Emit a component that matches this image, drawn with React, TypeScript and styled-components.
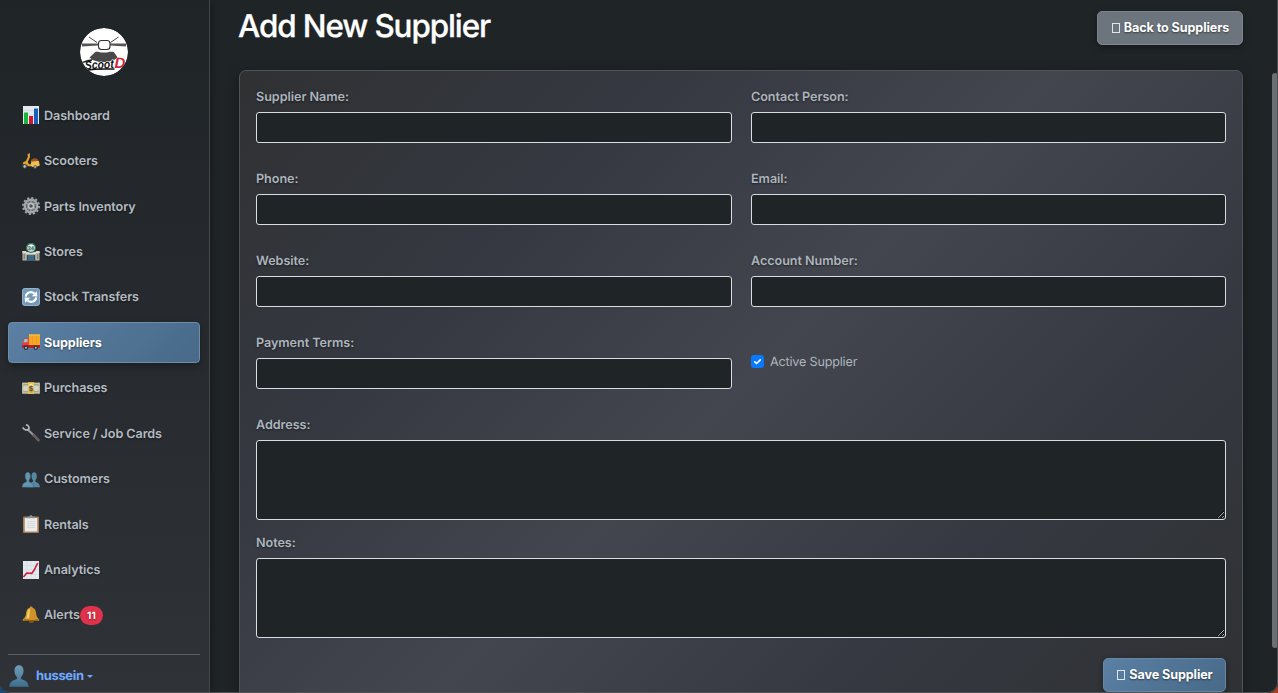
import React from "react";
import styled, { createGlobalStyle, css } from "styled-components";

const GlobalStyle = createGlobalStyle`
  *, *::before, *::after { box-sizing: border-box; }
  html, body { margin: 0; height: 100%; overflow: hidden; }
  body {
    background: linear-gradient(90deg, #174a74 0%, #174a74 50%, #a8401f 50%, #a8401f 100%);
    font-family: Inter, "Liberation Sans", sans-serif;
    font-size: 12.6px;
    text-rendering: geometricPrecision;
    color: #b4bbc2;
  }
`;

const Shell = styled.div`
  position: relative;
  display: flex;
  width: 1278px;
  height: 693px;
  overflow: hidden;
  background: #1f2427;
  border-radius: 0 0 10px 10px;
  &::after {
    content: "";
    position: absolute;
    inset: 0;
    border: solid #4d5154;
    border-width: 0 1px 1px 0;
    border-radius: 0 0 10px 10px;
    pointer-events: none;
  }
`;

const Sidebar = styled.aside`
  flex: 0 0 210px;
  display: flex;
  flex-direction: column;
  padding: 28px 9px 0 8px;
  border-right: 1px solid #43474b;
  background: linear-gradient(180deg, #1f2427 0%, #2f3237 100%);
  box-shadow: 2px 0 8px rgba(0, 0, 0, 0.28);
`;

const Logo = styled.svg`
  display: block;
  align-self: center;
  width: 48px;
  height: 48px;
  border-radius: 50%;
  flex: none;
`;

const Nav = styled.nav`
  display: flex;
  flex-direction: column;
  gap: 4.45px;
  margin-top: 18.7px;
`;

const NavItem = styled.a<{ $active?: boolean }>`
  display: flex;
  align-items: center;
  height: 41px;
  padding: 0 13px;
  border: 1px solid transparent;
  border-radius: 4px;
  font-weight: 600;
  letter-spacing: -0.08px;
  white-space: nowrap;
  text-shadow: 0 1px 2px rgba(0, 0, 0, 0.5);
  ${(p) =>
    p.$active &&
    css`
      color: #fff;
      font-weight: 700;
      border-color: #6d8dab;
      background: linear-gradient(135deg, #5b80a4, #486988);
      box-shadow: 0 3px 8px rgba(0, 0, 0, 0.35);
    `}
`;

const Label = styled.span`
  padding-top: 1.9px;
`;

const Icon = styled.svg`
  width: 18px;
  height: 18px;
  margin-right: 4px;
  flex: none;
`;

const Badge = styled.span`
  display: grid;
  place-items: center;
  width: 23px;
  height: 19px;
  padding-top: 1px;
  border-radius: 10px;
  background: #e0324a;
  color: #fff;
  font-size: 10px;
  font-weight: 700;
  letter-spacing: 0;
`;

const User = styled.div`
  display: flex;
  align-items: center;
  margin-top: 18px;
  padding-top: 9px;
  border-top: 1px solid #5b5f63;
  color: #6ea8fe;
  font-size: 13px;
  font-weight: 700;
  letter-spacing: -0.35px;
`;

const Avatar = styled.svg`
  width: 22px;
  height: 24px;
  margin-right: 6px;
`;

const Caret = styled.i`
  margin: 1px 0 0 3px;
  border: 3px solid transparent;
  border-top-color: #6ea8fe;
  border-bottom: 0;
`;

const Main = styled.main`
  flex: 1;
  display: flex;
  flex-direction: column;
  padding: 0 35px 0 29px;
`;

const Header = styled.header`
  display: flex;
  justify-content: space-between;
  height: 70px;
  flex: none;
`;

const Title = styled.h1`
  margin: 7px 0 0 -1px;
  color: #fff;
  font-size: 31.4px;
  line-height: 38px;
  font-weight: 500;
  letter-spacing: -1.1px;
  -webkit-text-stroke: 0.3px #fff;
`;

const Button = styled.button<{ $primary?: boolean }>`
  display: flex;
  align-items: center;
  justify-content: center;
  gap: 4px;
  width: ${(p) => (p.$primary ? 123 : 146)}px;
  height: 34px;
  padding: 0 0 1px 1px;
  border: 1px solid ${(p) => (p.$primary ? "#6587a8" : "#7d868e")};
  border-radius: 5px;
  background: ${(p) => (p.$primary ? "linear-gradient(135deg, #5b80a4, #486988)" : "#6c757d")};
  box-shadow: 0 2px 6px rgba(0, 0, 0, 0.35);
  color: #fff;
  font: 700 12.6px Inter, "Liberation Sans", sans-serif;
  letter-spacing: -0.1px;
  text-shadow: 0 1px 2px rgba(0, 0, 0, 0.5);
`;

const HeaderAction = styled.div`
  padding-top: 11px;
`;

const MissingGlyph = styled.i`
  width: 8px;
  height: 10px;
  border: 1px solid #e3e6e8;
`;

const Card = styled.form`
  display: flex;
  flex-direction: column;
  flex: none;
  height: 640px;
  padding: 16px;
  border: 1px solid #505357;
  border-radius: 7px;
  background: linear-gradient(135deg, #2f3133 0%, #353840 25%, #43464e 50%, #353840 75%, #2f3133 100%);
  box-shadow: 0 4px 14px rgba(0, 0, 0, 0.3);
`;

const Fields = styled.div`
  display: grid;
  grid-template-columns: 476px 475px;
  gap: 26px 19px;
`;

const Field = styled.label<{ $top?: number }>`
  display: flex;
  flex-direction: column;
  gap: 6px;
  margin-top: ${(p) => p.$top ?? 0}px;
`;

const Caption = styled.span`
  height: 19px;
  line-height: 21px;
  font-weight: 600;
  color: #adb5bd;
  letter-spacing: -0.04px;
  text-shadow: 0 1px 2px rgba(0, 0, 0, 0.5);
`;

const control = css`
  display: block;
  width: 100%;
  border: 1px solid #d9dde1;
  border-radius: 3px;
  background: #1f2427;
  color: #dee2e6;
  font: inherit;
  outline: none;
`;

const Input = styled.input`
  ${control}
  height: 31px;
`;

const TextArea = styled.textarea`
  ${control}
  height: 80px;
  resize: vertical;
`;

const CheckField = styled.label`
  display: flex;
  align-items: center;
  gap: 6px;
  height: 19px;
  margin-top: 19px;
  color: #adb5bd;
  letter-spacing: -0.18px;
`;

const CheckMark = styled.svg`
  width: 13px;
  height: 13px;
  border-radius: 3px;
  background: #087aff;
`;

const Actions = styled.div`
  display: flex;
  justify-content: flex-end;
  margin-top: 20px;
`;

const ScrollThumb = styled.div`
  position: absolute;
  top: 73px;
  right: 0;
  width: 6px;
  height: 575px;
  border-radius: 3px;
  background: #6b6e72;
`;

const person = "M9 1c2.5 0 3.8 1.8 3.7 4.5-.1 2-1 3.5-2 4.3v1.4c2.8.8 5.8 1.7 6.3 5.8H1c.5-4.1 3.5-5 6.3-5.8V9.8c-1-.8-1.9-2.3-2-4.3C5.2 2.8 6.5 1 9 1Z";

const icons: Record<string, React.ReactNode> = {
  Dashboard: (
    <>
      <path fill="#e4ebf0" d="M1 0h16v18H1z" />
      <path stroke="#c4ced6" strokeWidth=".5" d="M1 4.5h16M1 9h16M1 13.5h16" />
      <path fill="#16b83c" d="M2 6.5h4V18H2z" />
      <path fill="#cf1730" d="M7 10h4v8H7z" />
      <path fill="#1660bd" d="M12 2.5h4V18h-4z" />
    </>
  ),
  Scooters: (
    <>
      <path fill="none" stroke="#b9a284" d="m5.3 3 2.4-1.7" />
      <path fill="none" stroke="#e3a52d" strokeWidth="2" strokeLinejoin="round" d="M6.8 2.2 7 4.8 4.6 10l1.8 3.2h4" />
      <path fill="#e3a52d" d="M.6 12.4c.3-2.4 2-3.6 4.4-3l.8 2.4-1.6 1.2c-1-1-2-1.2-3.6-.6z" />
      <path fill="#f2bd4d" d="m9.4 9 7.4-.3 1 4.8-3.2 1.2-4.4.2-1.5-2z" />
      <path fill="#a5502c" d="m8.6 8 3.4-1.8 3.4.6.6 2-5.8.9z" />
      <circle cx="2.7" cy="14.4" r="2.1" fill="#555b60" />
      <circle cx="2.7" cy="14.4" r="1.1" fill="#d1d4d6" />
      <circle cx="13.2" cy="15" r="1.8" fill="#555b60" />
      <circle cx="13.2" cy="15" r=".8" fill="#d1d4d6" />
    </>
  ),
  "Parts Inventory": (
    <>
      <circle cx="9" cy="9" r="8" fill="none" stroke="#9ca3a8" strokeWidth="2" strokeDasharray="2.2 1.99" />
      <circle cx="9" cy="9" r="6.2" fill="none" stroke="#a2a8ac" strokeWidth="2.4" />
      <circle cx="9" cy="9" r="4.8" fill="#777f85" />
      <path stroke="#9ea5aa" strokeWidth="1.2" d="M9 3v12M3.8 6l10.4 6M3.8 12l10.4-6" />
      <circle cx="9" cy="9" r="2.5" fill="#4d5358" stroke="#bec3c6" strokeWidth="1.4" />
    </>
  ),
  Stores: (
    <>
      <path fill="#b8b5a8" d="M.5 9h17v8.5H.5z" />
      <path fill="#ddd9ca" d="M.3 8h4v2h-4zm13.4 0h4v2h-4zM4 9h10v2H4z" />
      <path fill="#264c64" d="M4.8 12h8.4v5.5H4.8z" />
      <path stroke="#71a4bd" d="M7 12v5M9 12v5M11 12v5" strokeWidth=".7" />
      <path stroke="#637078" d="M2.2 11v5M15.8 11v5" />
      <circle cx="9" cy="4.9" r="4.4" fill="#eef4ec" stroke="#27804f" strokeWidth="1.3" />
      <text x="9" y="6.8" fontSize="5" fontWeight="700" textAnchor="middle" fill="#396c87">24</text>
    </>
  ),
  "Stock Transfers": (
    <>
      <rect width="18" height="18" rx="3.4" fill="#7399b8" />
      <rect x=".5" y=".5" width="17" height="17" rx="3" fill="none" stroke="#95b4cc" />
      <path fill="none" stroke="#fff" strokeWidth="2.1" d="M3.8 8.6C4.2 4.4 9 2.6 12.6 5.6M14.2 9.4c-.4 4.2-5.2 6-8.8 3" />
      <path fill="#fff" d="m9.8 8.2 5.6.2-.6-5.2zM8.2 9.8l-5.6-.2.6 5.2z" />
    </>
  ),
  Suppliers: (
    <>
      <path fill="#f7a522" d="M7 1.5h11V12H7z" />
      <path fill="#ffc244" d="M7 1.5h11v1H7z" />
      <path fill="#e39320" d="M10 3h.5v8H10zm4 0h.5v8H14z" />
      <path fill="#e34338" d="M2.2 5H7v9H.5V9.5z" />
      <path fill="#8cc5dd" d="M2.5 6h3.2v3.3H1.5z" />
      <path fill="#bd1b25" d="M0 12h18v2.8H0z" />
      <circle cx="4" cy="14.7" r="2.2" fill="#2d3034" />
      <circle cx="4" cy="14.7" r="1" fill="#c1c7cb" />
      <circle cx="13.8" cy="14.7" r="2.2" fill="#2d3034" />
      <circle cx="13.8" cy="14.7" r="1" fill="#c1c7cb" />
    </>
  ),
  Purchases: (
    <>
      <path fill="#a3a48c" d="M0 3.5h18v11.3H0z" />
      <path fill="none" stroke="#d1d0b3" strokeWidth=".8" d="M1 4.5h16v9.3H1z" />
      <circle cx="4" cy="9.2" r="3" fill="#d5d5bc" />
      <circle cx="14" cy="9.2" r="3" fill="#d5d5bc" />
      <path fill="#efc64f" d="M6 3.2h6V15H6z" />
      <ellipse cx="9" cy="9.1" rx="2.5" ry="4" fill="#f7ebb5" />
      <text x="9" y="11.8" fontSize="7" fontWeight="700" textAnchor="middle" fill="#665634">$</text>
    </>
  ),
  "Service / Job Cards": (
    <>
      <path fill="none" stroke="#8f999f" strokeWidth="2.2" d="m5.2 5 7 6.7" />
      <path fill="none" stroke="#aeb6ba" strokeWidth="1.7" d="M3.9 .9c2.6.3 3.6 2.2 2.8 4.5-2.3 1.2-4.9.4-5.9-2" />
      <path fill="none" stroke="#60666b" strokeWidth="2.7" strokeLinecap="round" d="m11.7 11.2 4.7 5" />
      <path fill="none" stroke="#9a4549" strokeWidth=".9" d="m12 12 3.8 4" />
    </>
  ),
  Customers: (
    <>
      <g transform="translate(5.7 1.2) scale(.72 .94)"><path fill="#5587a3" d={person} /></g>
      <g transform="translate(-.7 1.2) scale(.72 .94)"><path fill="#6395b1" stroke="#315f78" strokeWidth=".5" d={person} /></g>
    </>
  ),
  Rentals: (
    <>
      <rect x="1" y="1.5" width="16" height="16.5" rx="1" fill="#a57c55" />
      <path fill="#ebecec" d="M2.7 3h12.6v13.5H2.7z" />
      <path stroke="#cfd1d3" strokeWidth=".7" d="M5 6.5h8M5 8.5h8M5 10.5h8M5 12.5h8" />
      <path fill="#8c959c" d="M5 3.3V1.8h2.5L8 .3h2l.5 1.5H13v1.5z" />
    </>
  ),
  Analytics: (
    <>
      <path fill="#e5eaee" d="M1 0h16v18H1z" />
      <path stroke="#cbd5dc" strokeWidth=".5" d="M1 4.5h16M1 9h16M1 13.5h16M5 0v18M9 0v18M13 0v18" />
      <path fill="none" stroke="#d21c39" strokeWidth="1.6" d="m1.5 16 3.2-4 5.1.4 2.5-3.6L15.7 2" />
    </>
  ),
  Alerts: (
    <>
      <ellipse cx="9.4" cy="14.9" rx="2.6" ry="2" fill="#855514" />
      <path fill="#cf942c" d="M8.2.6h2l.4 1.1c2.4.8 3.4 2.6 3.5 5.4.1 3.3 1.2 4.5 3.1 6.3v1.4H.8v-1.4c2-1.6 3.1-3 3.3-6.3.1-2.8 1.3-4.6 3.6-5.4z" />
      <path fill="#f3cf6c" d="M6.5 3.2 8 2.7 7.2 12l-3.5.8c2-2.2 1-6.1 2.8-9.6" />
      <path fill="none" stroke="#8e5b17" d="M2 13.7c3.5 1.1 10.5 1.1 14.5 0" />
    </>
  ),
};

const fieldNames = ["Supplier Name:", "Contact Person:", "Phone:", "Email:", "Website:", "Account Number:", "Payment Terms:"];

export default function App() {
  return (
    <>
      <GlobalStyle />
      <Shell>
        <Sidebar>
          <Logo viewBox="0 0 48 48">
            <circle cx="24" cy="24" r="24" fill="#fff" />
            <path fill="none" stroke="#333" strokeWidth=".9" d="m9 9 8 5.5M38.5 9l-8 5.5" />
            <path fill="#555" d="M2 15.6h16v1.8L2 18.6zM30 15.6h16v3l-16-1.2z" />
            <rect x="18.5" y="12.5" width="11.5" height="9" rx="3" fill="#fff" stroke="#333" strokeWidth="1.1" />
            <path fill="#484848" d="M15 24.2c3-1 5 .6 9 .4 4 .2 6-1.4 10-.4l3.5 5-3 2.6-7 2.2h-8l-7-2-3-2.6z" />
            <g fontFamily="Liberation Sans, sans-serif" fontStyle="italic" fontWeight="700">
              <text transform="rotate(-3 4 42)" x="5" y="41.5" fontSize="12" fill="#111" stroke="#fff" strokeWidth="1" paintOrder="stroke" textLength="29" lengthAdjust="spacingAndGlyphs">Scoot</text>
              <text x="34.5" y="39.5" fontSize="15" fill="#d01f36">D</text>
            </g>
            <path fill="none" stroke="#111" strokeWidth="1.5" d="M2.5 34.5c4.5-1.5 7-2.5 9.5-2.5M6 42.3c8-1.4 18-1.6 28.5-1.2" />
          </Logo>
          <Nav>
            {Object.keys(icons).map((name) => (
              <NavItem key={name} $active={name === "Suppliers"}>
                <Icon viewBox="0 0 18 18">{icons[name]}</Icon>
                <Label>{name}</Label>
                {name === "Alerts" && <Badge>11</Badge>}
              </NavItem>
            ))}
          </Nav>
          <User>
            <Avatar viewBox="0 0 18 18" preserveAspectRatio="none">
              <defs>
                <linearGradient id="avatar" x2="0" y2="1">
                  <stop stopColor="#729cb7" />
                  <stop offset="1" stopColor="#3c708f" />
                </linearGradient>
              </defs>
              <path fill="url(#avatar)" d={person} />
            </Avatar>
            <Label>hussein</Label>
            <Caret />
          </User>
        </Sidebar>
        <Main>
          <Header>
            <Title>Add New Supplier</Title>
            <HeaderAction>
              <Button type="button"><MissingGlyph />Back to Suppliers</Button>
            </HeaderAction>
          </Header>
          <Card>
            <Fields>
              {fieldNames.map((name) => (
                <Field key={name}>
                  <Caption>{name}</Caption>
                  <Input />
                </Field>
              ))}
              <CheckField>
                <CheckMark viewBox="0 0 13 13">
                  <path fill="none" stroke="#fff" strokeWidth="1.7" strokeLinecap="round" strokeLinejoin="round" d="m3.8 6.8 1.8 1.7 3.7-3.7" />
                </CheckMark>
                <Label>Active Supplier</Label>
              </CheckField>
            </Fields>
            <Field $top={26}>
              <Caption>Address:</Caption>
              <TextArea />
            </Field>
            <Field $top={13}>
              <Caption>Notes:</Caption>
              <TextArea />
            </Field>
            <Actions>
              <Button type="button" $primary><MissingGlyph />Save Supplier</Button>
            </Actions>
          </Card>
        </Main>
        <ScrollThumb />
      </Shell>
    </>
  );
}
